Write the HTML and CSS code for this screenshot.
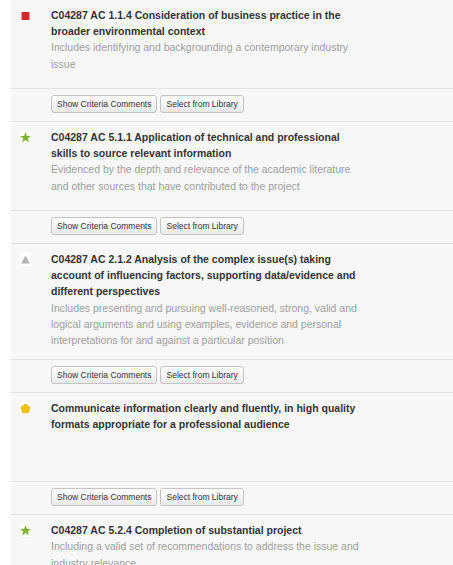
FILE: index.html
```html
<!DOCTYPE html>
<html lang="en">
<head>
  <meta charset="UTF-8">
  <meta name="viewport" content="width=device-width, initial-scale=1.0">
  <title>Marking Criteria</title>
  <link rel="stylesheet" href="styles.css">
</head>
<body>

  <div class="criteria">

    <div class="criterion">
      <div class="crit-head">
        <span class="status">
          <svg width="11" height="13" viewBox="0 0 11 13"><rect x="1.5" y="3" width="8" height="8" fill="#d3282c"/></svg>
        </span>
        <div class="crit-text">
          <div class="crit-title">C04287 AC 1.1.4 Consideration of business practice in the broader environmental context</div>
          <div class="crit-desc">Includes identifying and backgrounding a contemporary industry issue</div>
        </div>
      </div>
      <div class="crit-actions">
        <button class="btn">Show Criteria Comments</button>
        <button class="btn">Select from Library</button>
      </div>
    </div>

    <div class="criterion">
      <div class="crit-head">
        <span class="status">
          <svg width="11" height="13" viewBox="0 0 11 13"><path d="M5.5 1 L6.9 5 L11 5 L7.7 7.5 L8.9 11.6 L5.5 9.1 L2.1 11.6 L3.3 7.5 L0 5 L4.1 5 Z" fill="#7cb530"/></svg>
        </span>
        <div class="crit-text">
          <div class="crit-title">C04287 AC 5.1.1 Application of technical and professional skills to source relevant information</div>
          <div class="crit-desc">Evidenced by the depth and relevance of the academic literature and other sources that have contributed to the project</div>
        </div>
      </div>
      <div class="crit-actions">
        <button class="btn">Show Criteria Comments</button>
        <button class="btn">Select from Library</button>
      </div>
    </div>

    <div class="criterion">
      <div class="crit-head">
        <span class="status">
          <svg width="11" height="13" viewBox="0 0 11 13"><path d="M5.5 2.5 L9.8 10.5 L1.2 10.5 Z" fill="#b4b4b4"/></svg>
        </span>
        <div class="crit-text">
          <div class="crit-title">C04287 AC 2.1.2 Analysis of the complex issue(s) taking account of influencing factors, supporting data/evidence and different perspectives</div>
          <div class="crit-desc">Includes presenting and pursuing well-reasoned, strong, valid and logical arguments and using examples, evidence and personal interpretations for and against a particular position</div>
        </div>
      </div>
      <div class="crit-actions">
        <button class="btn">Show Criteria Comments</button>
        <button class="btn">Select from Library</button>
      </div>
    </div>

    <div class="criterion">
      <div class="crit-head">
        <span class="status">
          <svg width="11" height="13" viewBox="0 0 11 13"><path d="M5.5 2 L10 5.3 L8.5 10.8 L2.5 10.8 L1 5.3 Z" fill="#f2c200" stroke="#e0a800" stroke-width="0.6"/></svg>
        </span>
        <div class="crit-text">
          <div class="crit-title">Communicate information clearly and fluently, in high quality formats appropriate for a professional audience</div>
        </div>
      </div>
      <div class="crit-actions">
        <button class="btn">Show Criteria Comments</button>
        <button class="btn">Select from Library</button>
      </div>
    </div>

    <div class="criterion">
      <div class="crit-head">
        <span class="status">
          <svg width="11" height="13" viewBox="0 0 11 13"><path d="M5.5 1 L6.9 5 L11 5 L7.7 7.5 L8.9 11.6 L5.5 9.1 L2.1 11.6 L3.3 7.5 L0 5 L4.1 5 Z" fill="#7cb530"/></svg>
        </span>
        <div class="crit-text">
          <div class="crit-title">C04287 AC 5.2.4 Completion of substantial project</div>
          <div class="crit-desc">Including a valid set of recommendations to address the issue and industry relevance</div>
        </div>
      </div>
    </div>

  </div>

</body>
</html>
```

FILE: styles.css
```css
body {
  margin: 0;
  background: #fff;
  font-family: 'Liberation Sans', Arial, sans-serif;
  color: #333;
}
.criteria {
  margin-left: 11px;
  background: #f7f7f7;
  min-height: 100vh;
}
.crit-head {
  display: flex;
  align-items: flex-start;
  min-height: 89px;
  box-sizing: border-box;
  padding: 7px 0 11px 0;
  border-bottom: 1px solid #e2e2e2;
}
.status {
  flex: none;
  width: 11px;
  height: 13px;
  margin: 2px 20px 0 9px;
  background: #fff;
}
.status svg {
  display: block;
}
.crit-text {
  width: 316px;
  font-size: 10.5px;
  line-height: 16.2px;
}
.crit-title {
  font-weight: bold;
  color: #333;
}
.crit-desc {
  color: #9d9d9d;
}
.crit-actions {
  display: flex;
  gap: 3px;
  padding: 6px 0 8px 40px;
  border-bottom: 1px solid #e2e2e2;
}
.btn {
  height: 18px;
  padding: 0 5px;
  font-family: 'Liberation Sans', Arial, sans-serif;
  font-size: 8.5px;
  color: #333;
  background: linear-gradient(#ffffff, #e9e9e9);
  border: 1px solid #c4c4c4;
  border-radius: 3px;
  cursor: pointer;
}
.btn:hover {
  background: #e6e6e6;
}
```
